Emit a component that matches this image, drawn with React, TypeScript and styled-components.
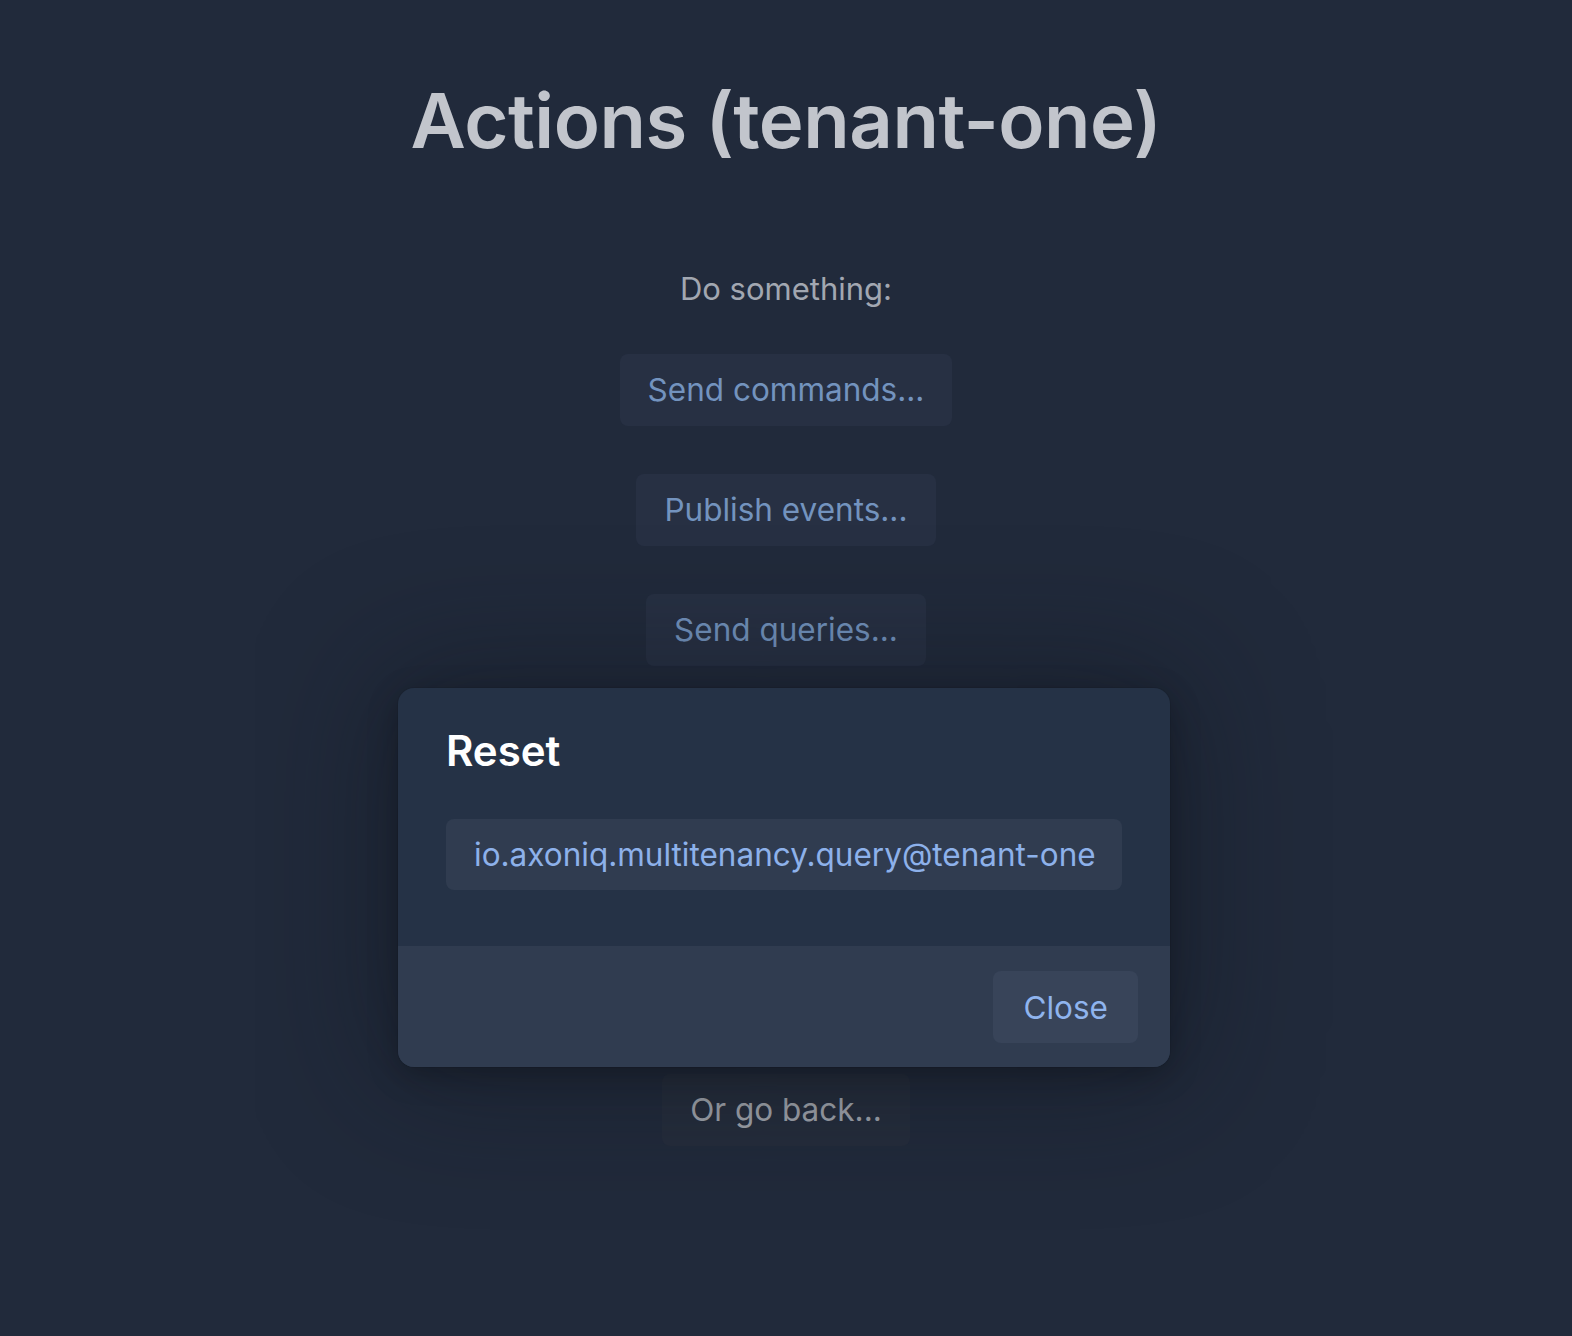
import React from "react";
import styled, { createGlobalStyle } from "styled-components";

const Global = createGlobalStyle`
  html, body { margin: 0; padding: 0; background: #212a3b; }
  body { font-family: Inter, "Noto Sans", sans-serif; -webkit-font-smoothing: antialiased; }
  #root { min-height: 1336px; position: relative; }
`;

const Page = styled.main`
  display: flex;
  flex-direction: column;
  align-items: center;
  padding-top: 75px;
`;

const Title = styled.h1`
  margin: 0 0 100px;
  font-size: 76px;
  font-weight: 600;
  line-height: 1.2;
  color: #c2c5cc;
  letter-spacing: -0.5px;
`;

const Prompt = styled.p`
  margin: 0 0 41px;
  font-size: 31px;
  line-height: 1.5;
  color: #a2a7b1;
`;

const Actions = styled.div`
  display: flex;
  flex-direction: column;
  align-items: center;
  gap: 48px;
`;

const Button = styled.button<{ $muted?: boolean }>`
  height: 72px;
  padding: 0 28px;
  border: none;
  border-radius: 8px;
  background: ${(p) => (p.$muted ? "#252d3c" : "#273043")};
  color: ${(p) => (p.$muted ? "#a0a4ac" : "#7393be")};
  font-family: inherit;
  font-size: 31.5px;
  cursor: pointer;
`;

/* room taken by the actions that sit behind the open dialog */
const Covered = styled.div`
  height: 312px;
`;

const Modal = styled.div`
  position: absolute;
  left: 398px;
  top: 688px;
  width: 772px;
  border-radius: 16px;
  overflow: hidden;
  background: #253246;
  box-shadow: 0 0 0 1px rgba(0, 0, 0, 0.05), 0 8px 30px rgba(0, 0, 0, 0.25),
    0 0 130px 20px rgba(14, 19, 28, 0.4);
`;

const ModalBody = styled.div`
  padding: 38px 48px 56px;
`;

const ModalTitle = styled.h2`
  margin: 0 0 43px;
  font-size: 42px;
  font-weight: 600;
  line-height: 1.2;
  color: #ffffff;
`;

const Code = styled.div`
  display: flex;
  align-items: center;
  height: 71px;
  padding: 0 28px;
  border-radius: 8px;
  background: #303c50;
  color: #8db1ea;
  font-size: 31.5px;
  white-space: nowrap;
`;

const Footer = styled.div`
  display: flex;
  justify-content: flex-end;
  padding: 25px 32px 24px;
  background: #303c50;
`;

const CloseButton = styled.button`
  height: 72px;
  padding: 0 30px;
  border: none;
  border-radius: 8px;
  background: #384459;
  color: #8fb4ee;
  font-family: inherit;
  font-size: 31.5px;
  cursor: pointer;
`;

export default function App() {
  return (
    <>
      <Global />
      <Page>
        <Title>Actions (tenant-one)</Title>
        <Prompt>Do something:</Prompt>
        <Actions>
          <Button>Send commands...</Button>
          <Button>Publish events...</Button>
          <Button>Send queries...</Button>
          <Covered />
          <Button $muted>Or go back...</Button>
        </Actions>
      </Page>
      <Modal>
        <ModalBody>
          <ModalTitle>Reset</ModalTitle>
          <Code>io.axoniq.multitenancy.query@tenant-one</Code>
        </ModalBody>
        <Footer>
          <CloseButton>Close</CloseButton>
        </Footer>
      </Modal>
    </>
  );
}
